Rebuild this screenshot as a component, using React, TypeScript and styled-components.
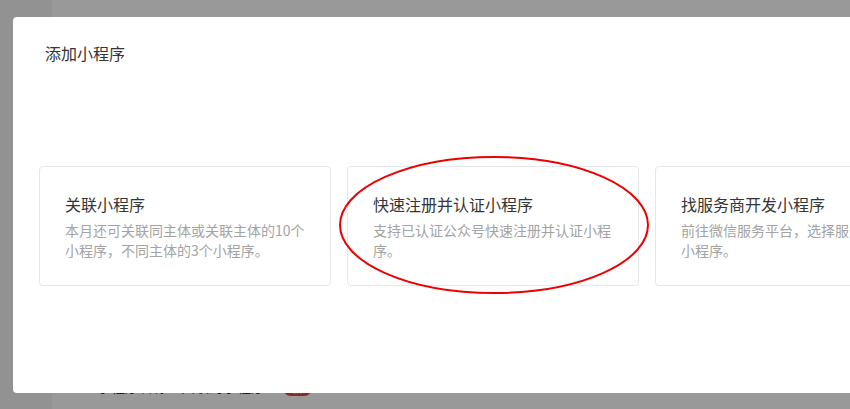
import React from "react";
import styled, { createGlobalStyle } from "styled-components";

const GlobalStyle = createGlobalStyle`
  html, body {
    margin: 0;
    padding: 0;
    width: 100%;
    height: 100%;
    overflow: hidden;
    background: #ffffff;
    font-family: "Noto Sans CJK SC", "Noto Sans", sans-serif;
  }
`;

type Option = {
    title: string;
    desc: string;
};

const options: Option[] = [
    { title: "关联小程序", desc: "本月还可关联同主体或关联主体的10个小程序，不同主体的3个小程序。" },
    { title: "快速注册并认证小程序", desc: "支持已认证公众号快速注册并认证小程序。" },
    { title: "找服务商开发小程序", desc: "前往微信服务平台，选择服务商来开发小程序。" },
];

export default function App(): React.JSX.Element {
    return (
        <>
            <GlobalStyle/>
            <Page>
                <SideBar/>
                <PageBody>
                    <ListRow>
                        <RowText>小程序名称已关联的小程序</RowText>
                        <Badge>新</Badge>
                    </ListRow>
                </PageBody>
            </Page>
            <Mask>
                <Dialog>
                    <DialogTitle>添加小程序</DialogTitle>
                    <CardRow>
                        {options.map((option) => (
                            <Card key={option.title}>
                                <CardTitle>{option.title}</CardTitle>
                                <CardDesc>{option.desc}</CardDesc>
                            </Card>
                        ))}
                    </CardRow>
                </Dialog>
                <Highlight width="312" height="142" viewBox="0 0 312 142">
                    <ellipse cx="156" cy="71" rx="154" ry="68" fill="none" stroke="#ee0000" strokeWidth="2"/>
                </Highlight>
            </Mask>
        </>
    );
}

const Page = styled.div`
  display: flex;
  flex-direction: row;
  width: 850px;
  height: 409px;
`;

const SideBar = styled.div`
  width: 52px;
  flex-shrink: 0;
  background: #f3f3f3;
`;

const PageBody = styled.div`
  flex: 1;
  padding-top: 375px;
  padding-left: 45px;
`;

const ListRow = styled.div`
  display: flex;
  flex-direction: row;
  align-items: flex-start;
  gap: 18px;
  height: 22px;
`;

const RowText = styled.span`
  font-size: 14px;
  line-height: 22px;
  color: #353535;
`;

const Badge = styled.span`
  display: inline-block;
  width: 29px;
  height: 16px;
  line-height: 16px;
  margin-top: 5px;
  border-radius: 8px;
  background: #e64340;
  color: #ffffff;
  font-size: 11px;
  text-align: center;
`;

const Mask = styled.div`
  position: fixed;
  inset: 0;
  background: rgba(0, 0, 0, 0.4);
`;

const Dialog = styled.div`
  position: absolute;
  left: 13px;
  top: 17px;
  width: 960px;
  height: 376px;
  box-sizing: border-box;
  background: #ffffff;
  border-radius: 4px;
  padding: 25px 32px 0 26px;
`;

const DialogTitle = styled.h3`
  margin: 0 0 0 6px;
  font-size: 16px;
  font-weight: 400;
  line-height: 22px;
  color: #353535;
`;

const CardRow = styled.div`
  display: flex;
  flex-direction: row;
  gap: 16px;
  margin-top: 102px;
`;

const Card = styled.div`
  width: 292px;
  height: 120px;
  box-sizing: border-box;
  flex-shrink: 0;
  padding: 25px 24px 0 25px;
  border: 1px solid #e4e8eb;
  border-radius: 4px;
  background: #ffffff;
`;

const CardTitle = styled.div`
  font-size: 16px;
  line-height: 24px;
  color: #353535;
`;

const CardDesc = styled.div`
  margin-top: 4px;
  font-size: 14px;
  line-height: 20px;
  color: #a3a3a3;
`;

const Highlight = styled.svg`
  position: absolute;
  left: 338px;
  top: 154px;
`;
